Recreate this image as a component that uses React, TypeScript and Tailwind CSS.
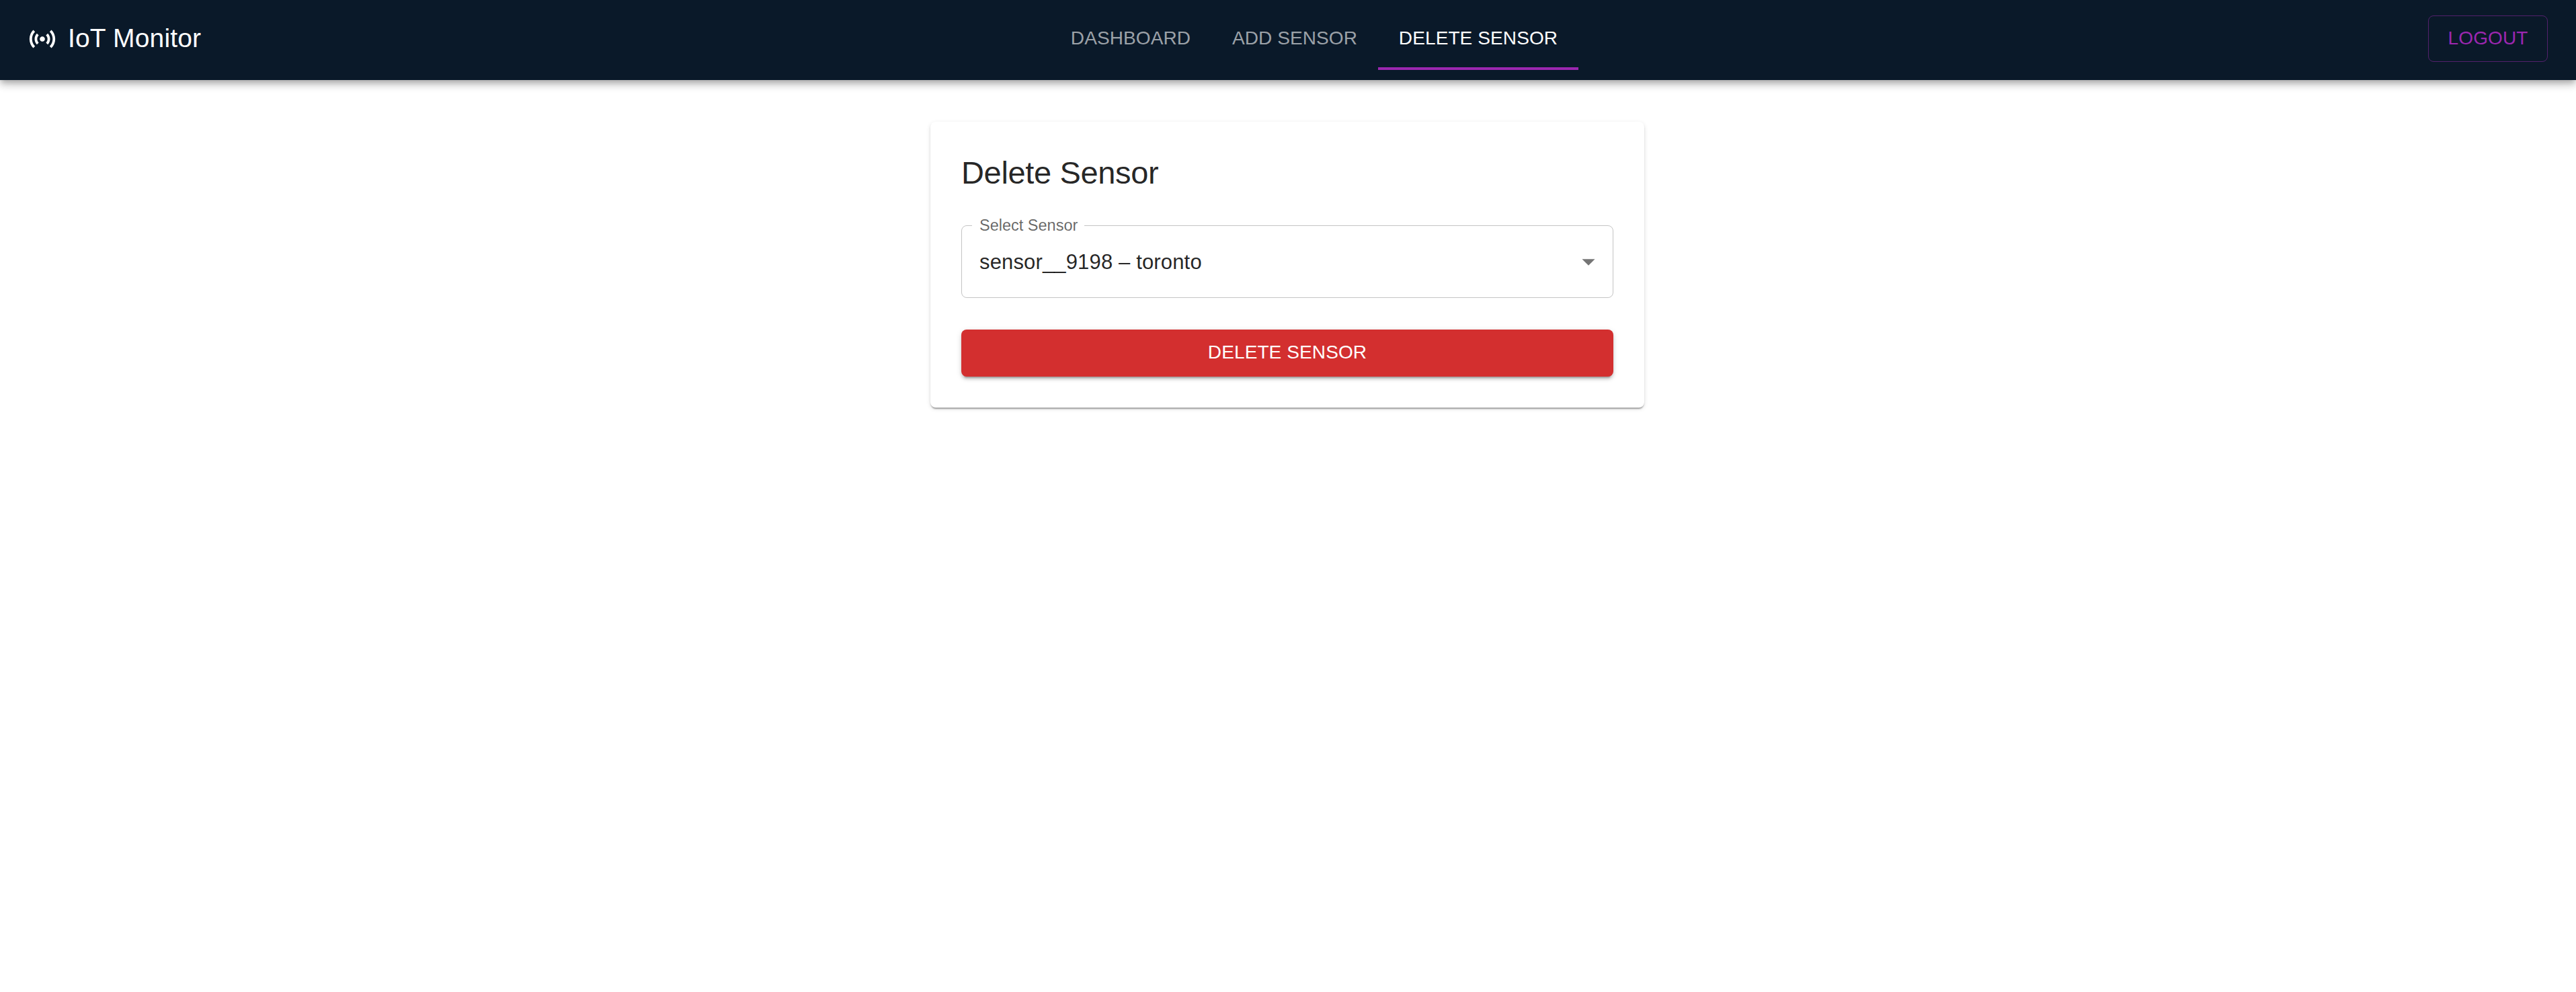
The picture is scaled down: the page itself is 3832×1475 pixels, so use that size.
const tabs = [
  { label: 'DASHBOARD', active: false },
  { label: 'ADD SENSOR', active: false },
  { label: 'DELETE SENSOR', active: true },
];

function SensorsIcon() {
  return (
    <svg viewBox="0 0 24 24" fill="currentColor" className="size-[46px] shrink-0">
      <path d="M7.76 16.24C6.67 15.16 6 13.66 6 12s.67-3.16 1.76-4.24l1.42 1.42C8.45 9.9 8 10.9 8 12c0 1.1.45 2.1 1.17 2.83zm8.48 0C17.33 15.16 18 13.66 18 12s-.67-3.16-1.76-4.24l-1.42 1.42C15.55 9.9 16 10.9 16 12c0 1.1-.45 2.1-1.17 2.83zM12 10c-1.1 0-2 .9-2 2s.9 2 2 2 2-.9 2-2-.9-2-2-2m8 2c0 2.21-.9 4.21-2.35 5.65l1.42 1.42C20.88 17.26 22 14.76 22 12s-1.12-5.26-2.93-7.07l-1.42 1.42C19.1 7.79 20 9.79 20 12M6.35 6.35 4.93 4.93C3.12 6.74 2 9.24 2 12s1.12 5.26 2.93 7.07l1.42-1.42C4.9 16.21 4 14.21 4 12s.9-4.21 2.35-5.65" />
    </svg>
  );
}

function Header() {
  return (
    <header className="flex h-[119px] items-start bg-[#0a1929] text-white shadow-[0_4px_8px_-2px_rgba(0,0,0,0.2),0_8px_10px_0_rgba(0,0,0,0.14),0_2px_19px_0_rgba(0,0,0,0.12)]">
      <div className="flex h-[116px] w-[1562px] items-center gap-[15px] pl-10">
        <SensorsIcon />
        <span className="pb-[2px] text-[39px] leading-[60px] tracking-[0.15px]">IoT Monitor</span>
      </div>
      <nav className="mt-3 grid h-[92px] grid-cols-[240px_248px_298px]">
        {tabs.map((tab) => (
          <a
            key={tab.label}
            className={
              tab.active
                ? 'flex h-[92px] items-center justify-center border-b-4 border-[#9c27b0] pt-px text-[28px] tracking-[0.1px]'
                : 'flex h-[92px] items-center justify-center border-b-4 border-transparent pt-px text-[28px] tracking-[0.1px] text-white/60'
            }
          >
            {tab.label}
          </a>
        ))}
      </nav>
      <button className="mt-[23px] mr-[42px] ml-auto flex h-[69px] w-[178px] items-center justify-center rounded-[8px] border border-[#9c27b0]/50 pb-[2px] text-[28px] tracking-[0.1px] text-[#9c27b0]">
        LOGOUT
      </button>
    </header>
  );
}

function SensorSelect() {
  return (
    <fieldset className="mt-9 h-[119px] rounded-[8px] border border-black/[0.23] pl-[15px]">
      <legend className="h-[23px] w-[167px] pl-[11px] text-[23.5px] leading-[23px] whitespace-nowrap text-black/60">
        Select Sensor
      </legend>
      <div className="flex items-center justify-between pt-[19px] pr-[13px] pl-[11px]">
        <span className="text-[31px] leading-[45px] tracking-[0.15px] text-black/87">sensor__9198 – toronto</span>
        <svg viewBox="0 0 24 24" className="size-[46px] fill-black/[0.54]">
          <path d="m7 10 5 5 5-5z" />
        </svg>
      </div>
    </fieldset>
  );
}

export default function App() {
  return (
    <div className="flex min-h-[1475px] flex-col bg-white font-['Liberation_Sans',Arial,sans-serif]">
      <Header />
      <main className="mt-[62px] ml-[1384px] h-[425px] w-[1062px] rounded-[8px] bg-white px-[46px] pt-[46px] shadow-[0_4px_2px_-2px_rgba(0,0,0,0.2),0_2px_2px_0_rgba(0,0,0,0.14),0_2px_6px_0_rgba(0,0,0,0.12)]">
        <h1 className="h-[61px] text-[47px] leading-[60px] tracking-[-0.35px] text-black/87">Delete Sensor</h1>
        <SensorSelect />
        <button className="mt-[47px] flex h-[70px] w-full items-center justify-center rounded-[8px] bg-[#d32f2f] pb-[3px] text-[28px] tracking-[0.1px] text-white shadow-[0_6px_2px_-4px_rgba(0,0,0,0.2),0_4px_4px_0_rgba(0,0,0,0.14),0_2px_10px_0_rgba(0,0,0,0.12)]">
          DELETE SENSOR
        </button>
      </main>
    </div>
  );
}
